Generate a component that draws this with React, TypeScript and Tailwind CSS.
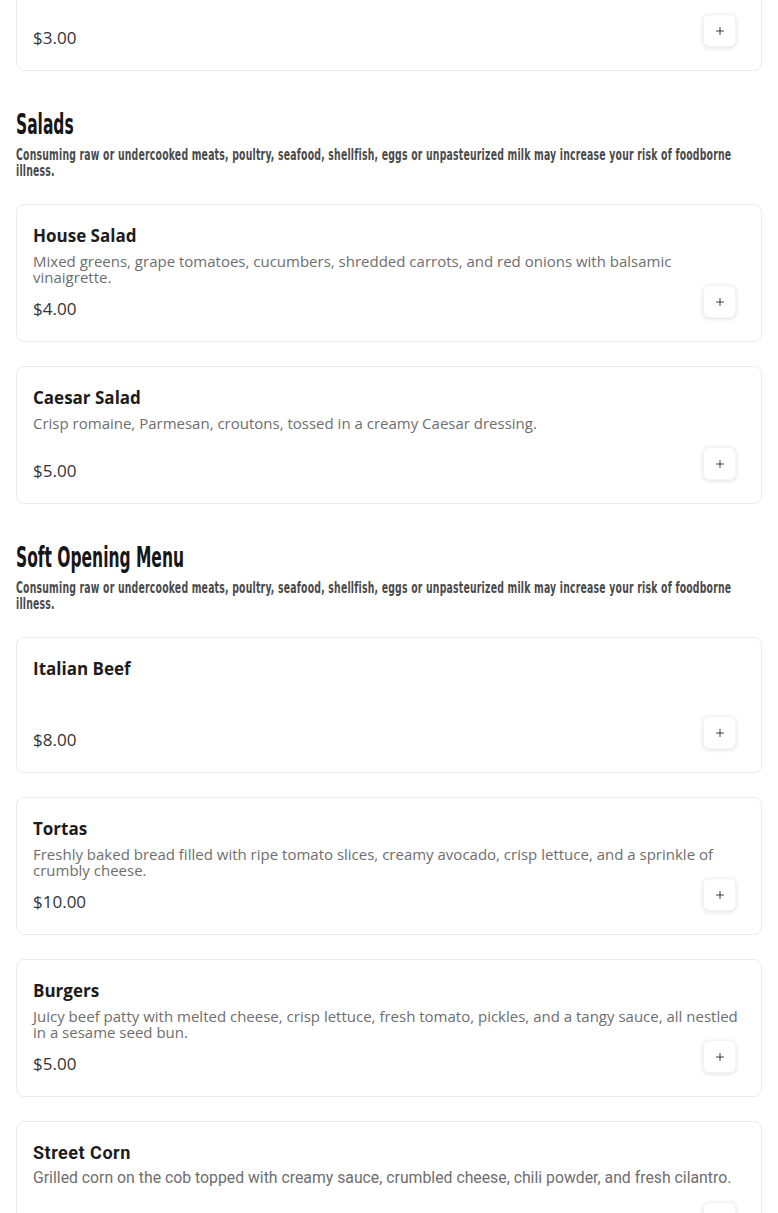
import React from "react";
import { Plus } from "lucide-react";

type Item = { title: string; desc: string; price: string; alt?: boolean };

const DISCLAIMER =
  "Consuming raw or undercooked meats, poultry, seafood, shellfish, eggs or unpasteurized milk may increase your risk of foodborne illness.";

const CONDENSED = "font-['Liberation_Sans_Narrow','DejaVu_Sans_Condensed',sans-serif]";

function Card({ item }: { item: Item }) {
  const font = item.alt
    ? "font-['Roboto','Liberation_Sans',sans-serif]"
    : "font-['Open_Sans','Liberation_Sans',sans-serif]";
  return (
    <div className={`rounded-lg border border-[#ebebeb] bg-white p-4 flex flex-col ${font}`}>
      <div
        className={`h-[30px] flex items-center font-bold text-[#1c1c1c] leading-[30px] ${
          item.alt ? "text-[18px] tracking-[0.5px]" : "text-[17px]"
        }`}
      >
        {item.title}
      </div>
      <div
        className={`mt-[2px] leading-4 text-[#6e6e6e] ${item.desc ? "min-h-[32px]" : "min-h-[30px]"} ${
          item.alt ? "text-[15.8px]" : "text-[15px]"
        }`}
      >
        {item.desc}
      </div>
      <div className="flex justify-between h-[40px]">
        <div className="self-end leading-8 text-[17px] text-[#333]">{item.price}</div>
        <button className="self-start mr-[9px] w-[33px] h-[33px] rounded-md bg-white flex items-center justify-center shadow-[0_1px_4px_rgba(0,0,0,0.13)] border border-[#f3f3f3]">
          <Plus size={12} strokeWidth={1.75} color="#222" />
        </button>
      </div>
    </div>
  );
}

function Section({ title, items }: { title: string; items: Item[] }) {
  return (
    <section className="pt-10">
      <h2 className={`h-[28px] flex items-center text-[28px] leading-[28px] font-bold text-[#161616] ${CONDENSED}`}>
        <span className="inline-block origin-left scale-x-[0.615] whitespace-nowrap">{title}</span>
      </h2>
      <div className="mt-2 h-8">
        <p
          className={`w-[1070px] origin-top-left scale-x-[0.69] text-[15px] leading-4 text-[#4a4a4a] font-bold tracking-[0.3px] ${CONDENSED}`}
        >
          {DISCLAIMER}
        </p>
      </div>
      <div className="mt-[25px] flex flex-col gap-6">
        {items.map((it) => (
          <Card key={it.title} item={it} />
        ))}
      </div>
    </section>
  );
}

export default function App() {
  return (
    <div className="bg-white min-h-[1213px] overflow-hidden">
      <div className="px-4 mt-[-67px]">
        <Card
          item={{
            title: "Chips & Salsa",
            desc: "Crispy tortilla chips served with our house-made salsa.",
            price: "$3.00",
          }}
        />
        <Section
          title="Salads"
          items={[
            {
              title: "House Salad",
              desc: "Mixed greens, grape tomatoes, cucumbers, shredded carrots, and red onions with balsamic vinaigrette.",
              price: "$4.00",
            },
            {
              title: "Caesar Salad",
              desc: "Crisp romaine, Parmesan, croutons, tossed in a creamy Caesar dressing.",
              price: "$5.00",
            },
          ]}
        />
        <Section
          title="Soft Opening Menu"
          items={[
            { title: "Italian Beef", desc: "", price: "$8.00" },
            {
              title: "Tortas",
              desc: "Freshly baked bread filled with ripe tomato slices, creamy avocado, crisp lettuce, and a sprinkle of crumbly cheese.",
              price: "$10.00",
            },
            {
              title: "Burgers",
              desc: "Juicy beef patty with melted cheese, crisp lettuce, fresh tomato, pickles, and a tangy sauce, all nestled in a sesame seed bun.",
              price: "$5.00",
            },
            {
              title: "Street Corn",
              desc: "Grilled corn on the cob topped with creamy sauce, crumbled cheese, chili powder, and fresh cilantro.",
              price: "$4.00",
              alt: true,
            },
          ]}
        />
      </div>
    </div>
  );
}
